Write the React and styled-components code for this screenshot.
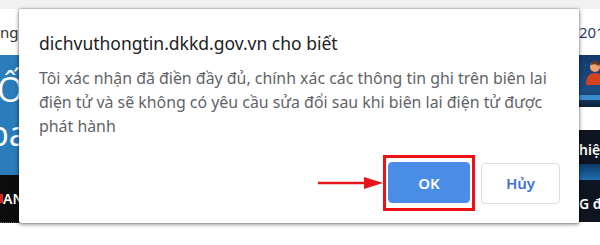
import React from "react";
import styled, { createGlobalStyle } from "styled-components";

const GlobalStyle = createGlobalStyle`
  html, body {
    margin: 0;
    padding: 0;
    background: #ffffff;
  }
  body {
    width: 600px;
    height: 245px;
    overflow: hidden;
    font-family: "Noto Sans", "Open Sans", Arial, sans-serif;
  }
`;

const App = () => {
  return (
    <Screen>
      <GlobalStyle />
      <TopStrip />
      <Page>
        <LeftSide>
          <HeaderCell>ngh</HeaderCell>
          <Banner>
            <BannerText>Ố</BannerText>
            <BannerText $shift="-12px">pa</BannerText>
          </Banner>
          <NavBar>
            <RedMark />
            <NavText>AN</NavText>
          </NavBar>
        </LeftSide>
        <RightSide>
          <HeaderCell $color="#2b3d6b">201</HeaderCell>
          <PromoImage>
            <PersonIcon viewBox="0 0 20 26">
              <circle cx="11" cy="8" r="5" fill="#f2a36b" />
              <path d="M8 3 Q11 0 15 4 L15 7 Q11 4 7 6 Z" fill="#6b3a1e" />
              <path d="M2 26 Q2 14 11 14 Q20 14 20 26 Z" fill="#d4431d" />
            </PersonIcon>
            <PromoStripe />
          </PromoImage>
          <WhiteGap />
          <DarkBlock>
            <DarkText>hiệp</DarkText>
            <BlueBand />
            <DarkText>G đ</DarkText>
          </DarkBlock>
        </RightSide>
      </Page>

      <Dialog>
        <Title>dichvuthongtin.dkkd.gov.vn cho biết</Title>
        <Message>
          Tôi xác nhận đã điền đầy đủ, chính xác các thông tin ghi trên biên lai
          điện tử và sẽ không có yêu cầu sửa đổi sau khi biên lai điện tử được
          phát hành
        </Message>
        <ButtonRow>
          <Arrow width="65" height="14" viewBox="0 0 65 14">
            <line x1="0" y1="7" x2="50" y2="7" stroke="#e8141b" strokeWidth="2.5" />
            <polygon points="46,1 65,7 46,13" fill="#e8141b" />
          </Arrow>
          <Highlight>
            <DialogButton $primary>OK</DialogButton>
          </Highlight>
          <DialogButton>Hủy</DialogButton>
        </ButtonRow>
      </Dialog>
    </Screen>
  );
};

export default App;

const Screen = styled.div`
  position: relative;
  width: 600px;
  height: 245px;
  overflow: hidden;
  background: #ffffff;
`;

const TopStrip = styled.div`
  height: 9px;
  background: #f1f1f1;
`;

const Page = styled.div`
  display: flex;
  justify-content: space-between;
`;

const LeftSide = styled.div`
  width: 300px;
  display: flex;
  flex-direction: column;
`;

const RightSide = styled.div`
  width: 300px;
  display: flex;
  flex-direction: column;
  align-items: flex-end;
`;

const HeaderCell = styled.div`
  height: 46px;
  display: flex;
  align-items: center;
  font-family: "Noto Sans", Arial, sans-serif;
  font-size: 15px;
  color: ${(p) => p.$color || "#333333"};
  width: 21px;
  overflow: hidden;
  white-space: nowrap;
  align-self: ${(p) => (p.$color ? "flex-end" : "flex-start")};
`;

const Banner = styled.div`
  height: 120px;
  background: #2a7cbb;
  display: flex;
  flex-direction: column;
  padding-top: 12px;
  box-sizing: border-box;
  overflow: hidden;
`;

const BannerText = styled.div`
  color: #ffffff;
  font-family: "Open Sans", Arial, sans-serif;
  font-size: 34px;
  line-height: 44px;
  margin-left: ${(p) => p.$shift || "-3px"};
  white-space: nowrap;
`;

const NavBar = styled.div`
  height: 47px;
  background: #0c0c0c;
  display: flex;
  align-items: center;
  border-bottom: 1px dotted #555;
`;

const RedMark = styled.span`
  width: 3px;
  height: 9px;
  background: #d8261e;
`;

const NavText = styled.span`
  color: #ffffff;
  font-family: "Noto Sans", Arial, sans-serif;
  font-size: 14px;
  font-weight: 600;
`;

const PromoImage = styled.div`
  position: relative;
  width: 21px;
  height: 52px;
  background: linear-gradient(#143a6c, #1d4e86 70%, #0d1f35);
  overflow: hidden;
  display: flex;
  flex-direction: column;
  justify-content: flex-end;
`;

const PersonIcon = styled.svg`
  position: absolute;
  left: 5px;
  top: 4px;
  width: 20px;
  height: 26px;
`;

const PromoStripe = styled.div`
  height: 5px;
  margin-bottom: 7px;
  background: #3a8ccf;
`;

const WhiteGap = styled.div`
  height: 23px;
`;

const DarkBlock = styled.div`
  width: 21px;
  height: 92px;
  background: #0e1420;
  display: flex;
  flex-direction: column;
  overflow: hidden;
  padding-top: 10px;
  box-sizing: border-box;
`;

const DarkText = styled.div`
  color: #ffffff;
  font-family: "Noto Sans", Arial, sans-serif;
  font-size: 14px;
  font-weight: 600;
  line-height: 20px;
  white-space: nowrap;
`;

const BlueBand = styled.div`
  height: 16px;
  margin: 4px 0 14px;
  background: linear-gradient(#0f3a66, #1f6fb0);
`;

const Dialog = styled.div`
  position: absolute;
  left: 19px;
  top: 9px;
  width: 560px;
  height: 214px;
  box-sizing: border-box;
  padding: 23px 19px 12px 20px;
  background: #ffffff;
  border-radius: 2px;
  box-shadow: 0 1px 4px rgba(0, 0, 0, 0.55), 0 0 0 1px rgba(0, 0, 0, 0.08);
  display: flex;
  flex-direction: column;
`;

const Title = styled.div`
  font-size: 17.5px;
  line-height: 22px;
  color: #202124;
  white-space: nowrap;
`;

const Message = styled.div`
  margin-top: 12px;
  font-size: 15.9px;
  line-height: 24px;
  color: #5f6368;
  width: 521px;
`;

const ButtonRow = styled.div`
  margin-top: auto;
  display: flex;
  justify-content: flex-end;
  align-items: center;
`;

const Arrow = styled.svg`
  display: block;
`;

const Highlight = styled.div`
  border: 3px solid #ee1111;
  padding: 4px 2px 5px;
  margin-right: 6px;
  display: flex;
`;

const DialogButton = styled.button`
  width: ${(p) => (p.$primary ? "82px" : "79px")};
  height: 41px;
  border-radius: 4px;
  font-family: "Noto Sans", Arial, sans-serif;
  font-size: 15px;
  font-weight: 600;
  cursor: pointer;
  border: 1px solid ${(p) => (p.$primary ? "#4a8de8" : "#dadce0")};
  background: ${(p) => (p.$primary ? "#4a8de8" : "#ffffff")};
  color: ${(p) => (p.$primary ? "#ffffff" : "#3b6fdc")};
`;
